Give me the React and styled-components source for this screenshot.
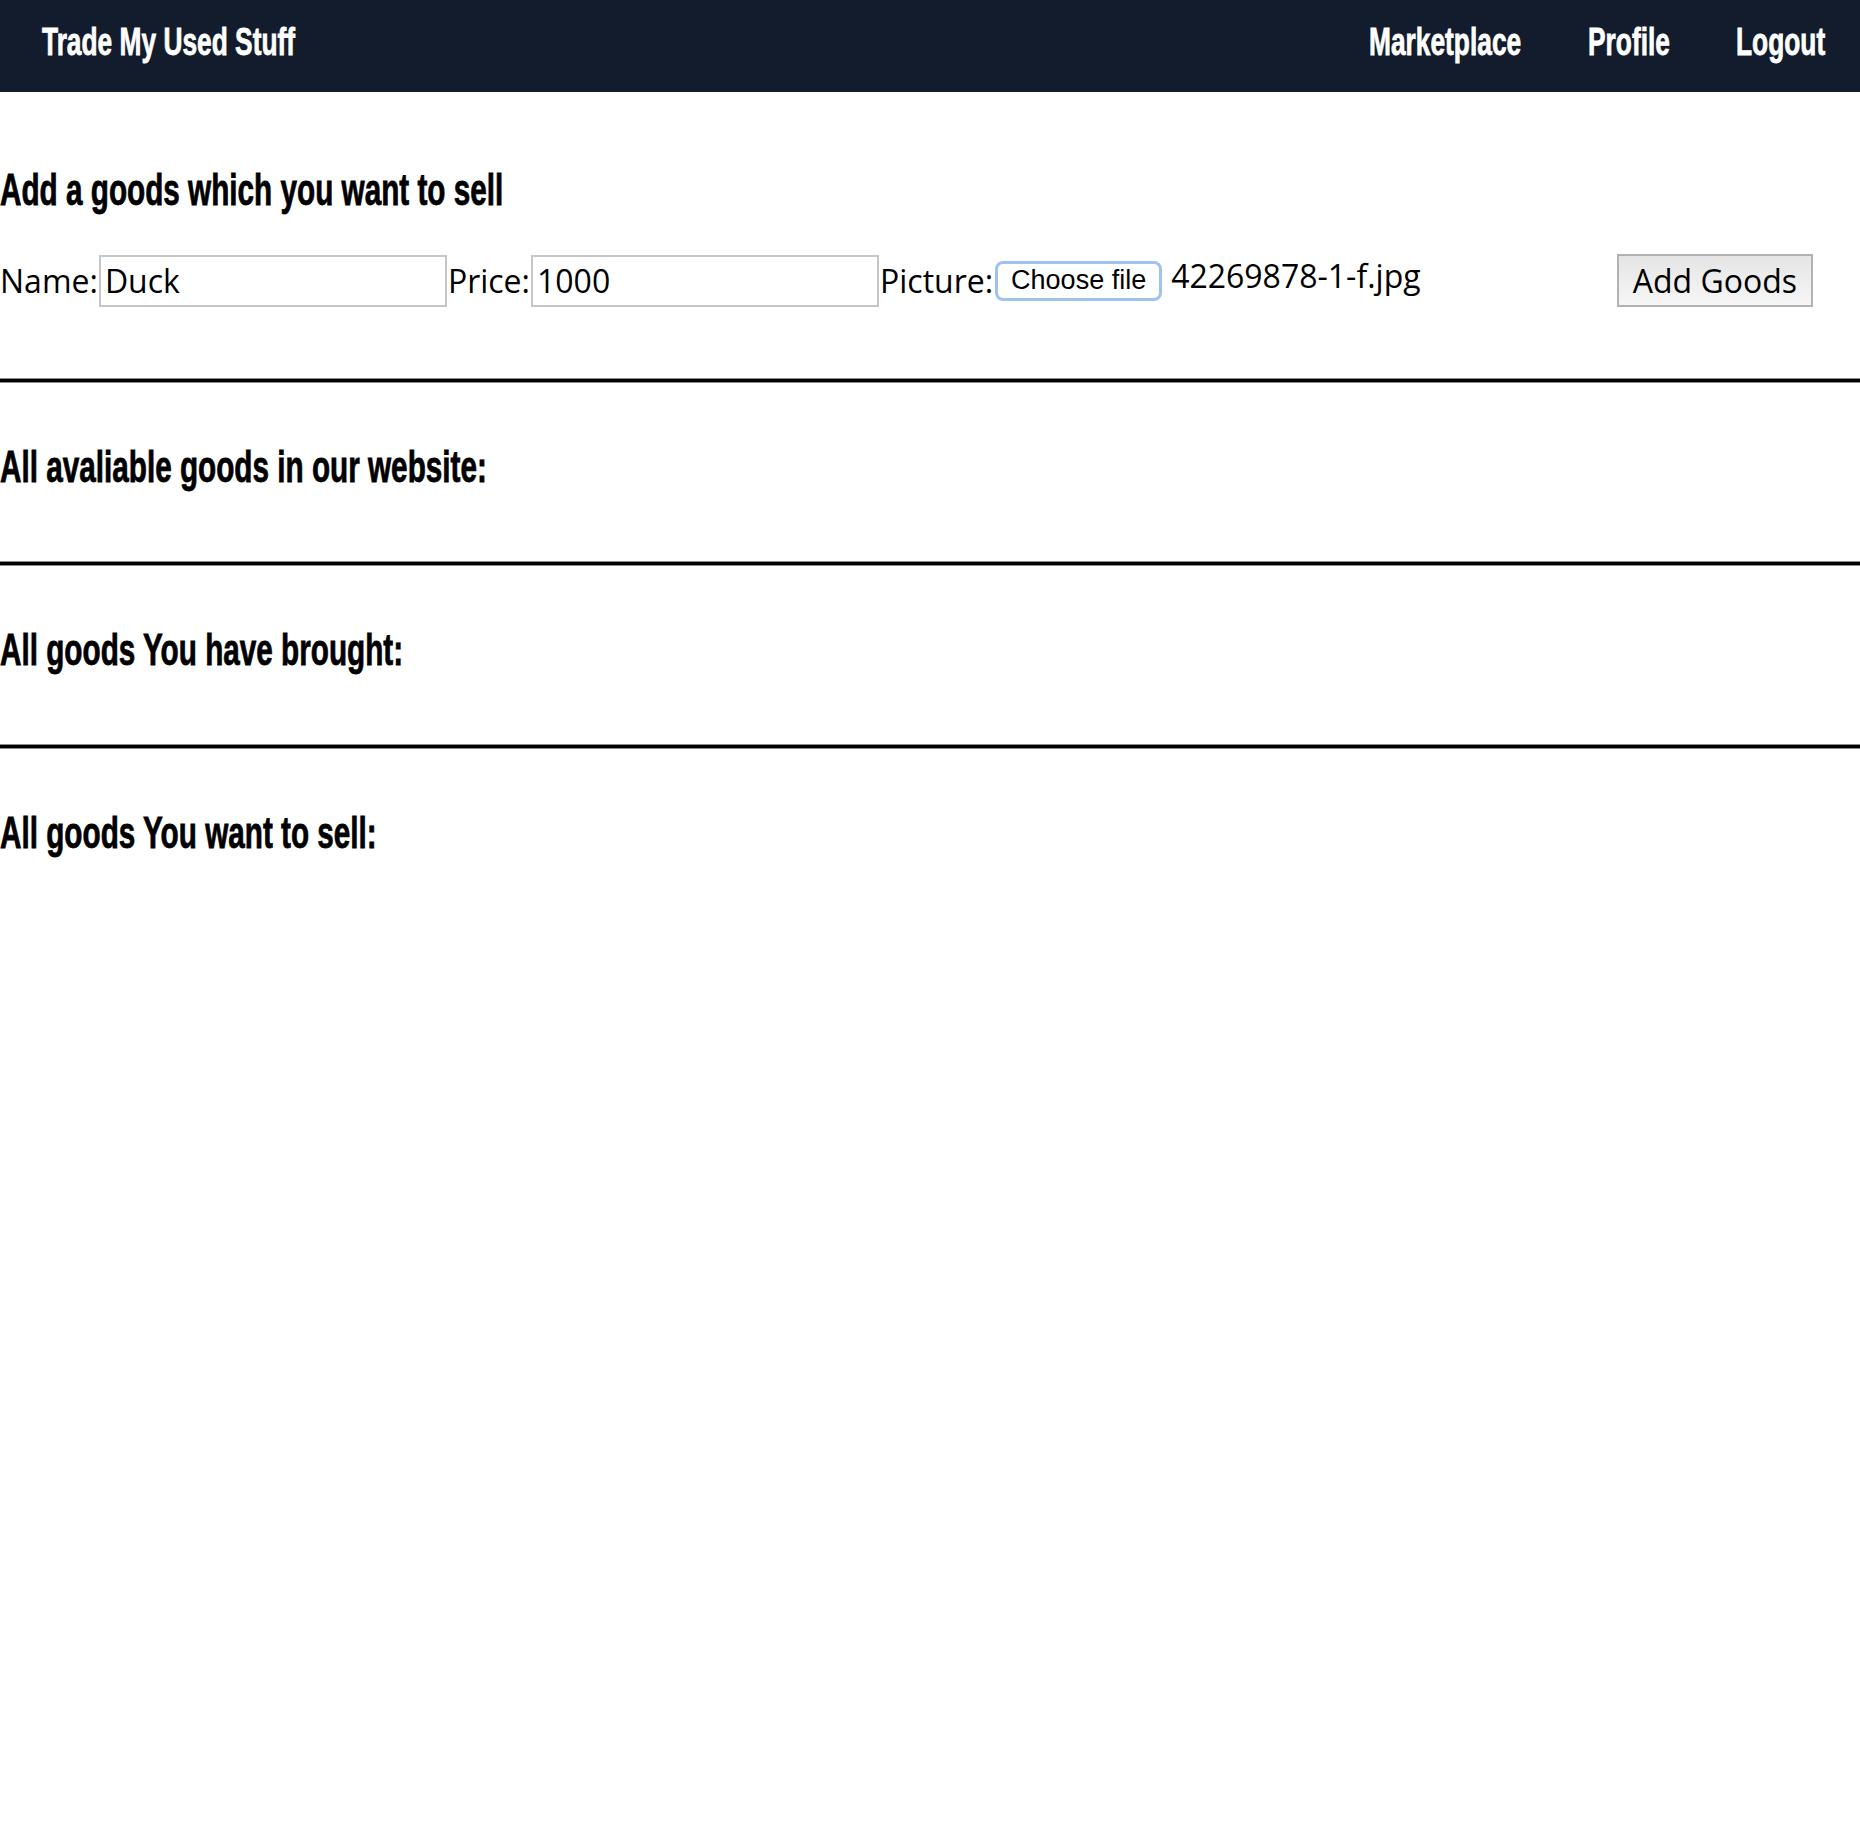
import React from "react";
import styled, { createGlobalStyle } from "styled-components";

const GlobalStyle = createGlobalStyle`
  html, body {
    margin: 0;
    padding: 0;
    background: #ffffff;
    font-family: "Open Sans", "Liberation Sans", sans-serif;
    color: #000;
  }
`;

// no condensed face installed: a bold sans squeezed horizontally stands in for Oswald
const condensed = `
  font-family: "Liberation Sans", Arial, sans-serif;
  font-weight: 700;
  white-space: nowrap;
  -webkit-text-stroke: 0.8px currentColor;
  transform: scaleX(0.675);
  transform-origin: left center;
`;

const Header = styled.header`
  display: flex;
  align-items: center;
  justify-content: space-between;
  box-sizing: border-box;
  height: 92px;
  padding: 0 43px 10px 42px;
  background-color: #121c2c;
`;

const Brand = styled.a`
  ${condensed};
  display: block;
  font-size: 39px;
  line-height: 39px;
  color: #ffffff;
  text-decoration: none;
`;

const Nav = styled.nav`
  display: flex;
  gap: 64px;
`;

const NavLink = styled.a`
  ${condensed};
  display: block;
  width: ${(p) => p.w}px;
  font-size: 39px;
  line-height: 39px;
  color: #ffffff;
  text-decoration: none;
`;

const Section = styled.section`
  padding: ${(p) => (p.first ? "76px 0 71px" : "62px 0 72px")};
`;

const Title = styled.h2`
  ${condensed};
  margin: 0;
  font-size: 44px;
  line-height: 44px;
  color: #000;
`;

const Divider = styled.hr`
  margin: 0;
  height: 3px;
  border: none;
  border-top: 1px solid #8a8a8a;
  border-bottom: 1px solid #8a8a8a;
  background: #000;
`;

const FormRow = styled.form`
  display: flex;
  align-items: center;
  margin-top: 42px;
  padding-right: 47px;
`;

const Label = styled.label`
  font-size: 32px;
  line-height: normal;
`;

const TextInput = styled.input`
  box-sizing: border-box;
  width: 348px;
  height: 52px;
  margin: 0 1px 0 1px;
  padding: 0 4px;
  border: 2px solid #c6c6c6;
  font-family: "Open Sans", sans-serif;
  font-size: 32px;
  color: #000;
  outline: none;
`;

const FilePicker = styled.div`
  display: flex;
  align-items: center;
  gap: 9px;
  margin-left: 2px;
  margin-top: -10px;
`;

const ChooseButton = styled.span`
  display: inline-flex;
  align-items: center;
  justify-content: center;
  box-sizing: border-box;
  width: 167px;
  height: 40px;
  margin-top: 10px;
  border: 3px solid #9ec2f2;
  border-radius: 8px;
  background: #ffffff;
  font-family: "Liberation Sans", Arial, sans-serif;
  font-size: 27px;
  color: #000;
`;

const FileName = styled.span`
  font-size: 32px;
  line-height: normal;
`;

const SubmitButton = styled.button`
  box-sizing: border-box;
  height: 53px;
  margin-left: auto;
  padding: 0 14px;
  border: 2px solid #b2b2b2;
  background: linear-gradient(#e5e5e5, #f6f6f6);
  font-family: "Open Sans", sans-serif;
  font-size: 32px;
  color: #000;
  cursor: pointer;
`;

export default () => (
  <React.Fragment>
    <GlobalStyle />
    <Header>
      <Brand href="#">Trade My Used Stuff</Brand>
      <Nav>
        <NavLink href="#" w={155}>Marketplace</NavLink>
        <NavLink href="#" w={84}>Profile</NavLink>
        <NavLink href="#" w={81}>Logout</NavLink>
      </Nav>
    </Header>
    <Section first>
      <Title>Add a goods which you want to sell</Title>
      <FormRow onSubmit={(e) => e.preventDefault()}>
        <Label>Name:</Label>
        <TextInput defaultValue="Duck" />
        <Label>Price:</Label>
        <TextInput defaultValue="1000" />
        <Label>Picture:</Label>
        <FilePicker>
          <ChooseButton>Choose file</ChooseButton>
          <FileName>42269878-1-f.jpg</FileName>
        </FilePicker>
        <SubmitButton type="submit">Add Goods</SubmitButton>
      </FormRow>
    </Section>
    <Divider />
    <Section>
      <Title>All avaliable goods in our website:</Title>
    </Section>
    <Divider />
    <Section>
      <Title>All goods You have brought:</Title>
    </Section>
    <Divider />
    <Section>
      <Title>All goods You want to sell:</Title>
    </Section>
  </React.Fragment>
);
